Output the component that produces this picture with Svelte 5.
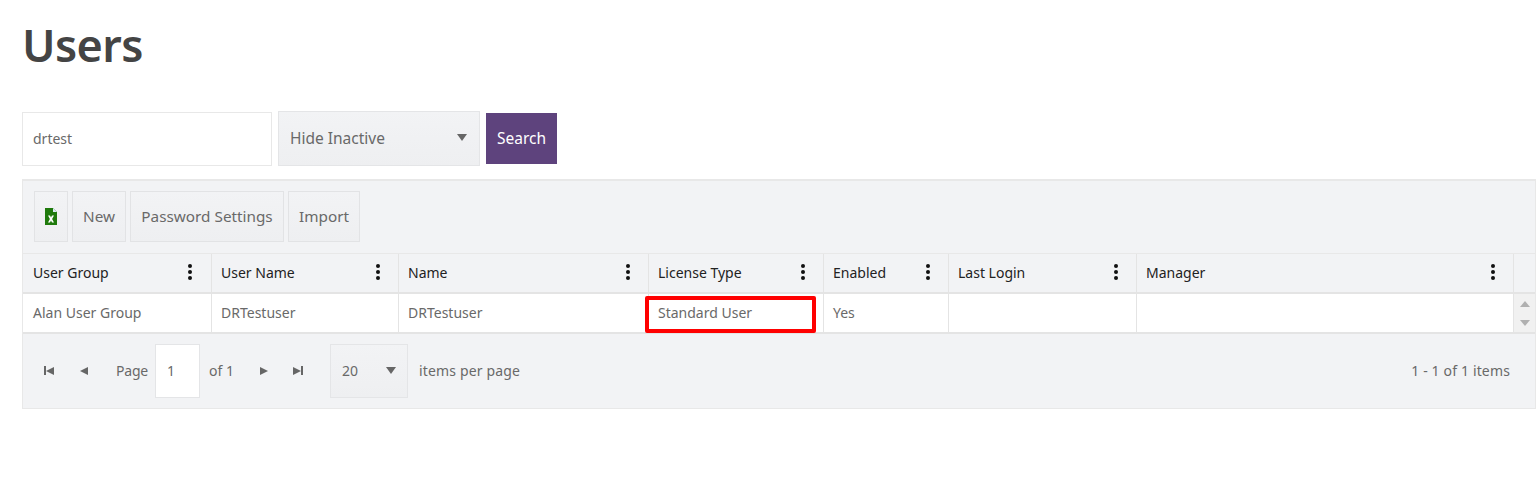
<script>
  const columns = [
    { title: "User Group", value: "Alan User Group", width: 189 },
    { title: "User Name", value: "DRTestuser", width: 187 },
    { title: "Name", value: "DRTestuser", width: 250 },
    { title: "License Type", value: "Standard User", width: 175, marked: true },
    { title: "Enabled", value: "Yes", width: 125 },
    { title: "Last Login", value: "", width: 188 },
    { title: "Manager", value: "", width: 377 }
  ];
</script>

<div class="page">
  <h1>Users</h1>

  <div class="filters">
    <input class="search-input" value="drtest" />
    <div class="select status">
      <span>Hide Inactive</span>
      <i class="caret"></i>
    </div>
    <button class="search-btn">Search</button>
  </div>

  <div class="grid">
    <div class="toolbar">
      <button class="tool excel" aria-label="Export to Excel">
        <svg width="12" height="17" viewBox="0 0 12 17">
          <path d="M0 0H8L12 4V17H0Z" fill="#1f7a0c" />
          <path d="M8 0L12 4H8Z" fill="#d9ecf5" />
          <path d="M3 7.5H5L6 9.6L7 7.5H9L7.1 11L9 14.5H7L6 12.4L5 14.5H3L4.9 11Z" fill="#fff" />
        </svg>
      </button>
      <button class="tool new">New</button>
      <button class="tool pass">Password Settings</button>
      <button class="tool import">Import</button>
    </div>

    <div class="table">
      <div class="row head">
        {#each columns as col}
          <div class="cell" style="width: {col.width}px">
            <span>{col.title}</span>
            <span class="dots"><b></b><b></b><b></b></span>
          </div>
        {/each}
        <div class="gutter"></div>
      </div>
      <div class="row body">
        {#each columns as col}
          <div class="cell" style="width: {col.width}px">
            {col.value}
            {#if col.marked}<div class="highlight"></div>{/if}
          </div>
        {/each}
        <div class="gutter scroll">
          <i class="up"></i>
          <i class="down"></i>
        </div>
      </div>
    </div>

    <div class="pager">
      <div class="nav">
        <span class="nav-btn"><i class="bar"></i><i class="tri left"></i></span>
        <span class="nav-btn"><i class="tri left"></i></span>
      </div>
      <span class="page-label">Page</span>
      <input class="page-input" value="1" />
      <span class="of">of 1</span>
      <div class="nav next">
        <span class="nav-btn"><i class="tri right"></i></span>
        <span class="nav-btn"><i class="tri right"></i><i class="bar"></i></span>
      </div>
      <div class="select size">
        <span>20</span>
        <i class="caret"></i>
      </div>
      <span class="per-page">items per page</span>
      <span class="info">1 - 1 of 1 items</span>
    </div>
  </div>
</div>

<style>
  :global(body) {
    margin: 0;
    background: #fff;
    font-family: "Noto Sans", "Open Sans", sans-serif;
    font-size: 14px;
    color: #696969;
  }

  .page {
    padding: 0 2px 0 22px;
  }

  h1 {
    margin: 0;
    padding-top: 15px;
    height: 111px;
    box-sizing: border-box;
    font-size: 45px;
    line-height: 60px;
    font-weight: 600;
    color: #444;
    letter-spacing: -0.6px;
  }

  .filters {
    display: flex;
    align-items: center;
    height: 55px;
    margin-bottom: 13px;
  }

  .search-input {
    width: 250px;
    height: 54px;
    box-sizing: border-box;
    border: 1px solid #e8e8e8;
    padding: 0 10px;
    font: inherit;
    font-size: 14px;
    color: #696969;
    outline: none;
    margin-right: 6px;
  }

  .select {
    display: flex;
    align-items: center;
    justify-content: space-between;
    box-sizing: border-box;
    background: linear-gradient(#f2f3f5, #eeeff1);
    border: 1px solid #e4e5e7;
  }

  .status {
    width: 202px;
    height: 55px;
    padding: 0 12px 2px 11px;
    font-size: 15.5px;
    margin-right: 6px;
  }

  .caret {
    width: 0;
    height: 0;
    border: 5.5px solid transparent;
    border-top: 7px solid #666;
    border-bottom: 0;
  }

  .search-btn {
    width: 71px;
    height: 51px;
    border: 0;
    padding: 0 0 2px;
    background: #5e437d;
    color: #fff;
    font: inherit;
    font-size: 15.5px;
  }

  .grid {
    box-sizing: border-box;
    width: 1514px;
    height: 230px;
    border: 1px solid #e8e8e8;
    border-top-width: 2px;
    background: #f2f3f5;
  }

  .toolbar {
    display: flex;
    gap: 4px;
    height: 72px;
    box-sizing: border-box;
    padding: 10px 11px;
  }

  .tool {
    height: 51px;
    box-sizing: border-box;
    padding: 0 0 2px;
    background: linear-gradient(#f2f3f5, #eeeff1);
    border: 1px solid #e2e3e5;
    font: inherit;
    font-size: 15.3px;
    color: #696969;
  }

  .excel {
    width: 34px;
    padding: 0;
    display: flex;
    align-items: center;
    justify-content: center;
  }

  .new {
    width: 54px;
  }

  .pass {
    width: 154px;
  }

  .import {
    width: 72px;
  }

  .row {
    display: flex;
    height: 40px;
  }

  .head {
    border-top: 1px solid #e8e8e8;
    border-bottom: 2px solid #e4e4e4;
    color: #222;
    box-sizing: content-box;
    height: 38px;
  }

  .body {
    background: #fff;
    border-bottom: 2px solid #e4e4e4;
    box-sizing: border-box;
  }

  .cell {
    position: relative;
    display: flex;
    align-items: center;
    justify-content: space-between;
    box-sizing: border-box;
    padding: 0 19px 2px 10px;
    border-right: 1px solid #e4e4e4;
  }

  .cell + .cell {
    padding-left: 9px;
    padding-right: 18px;
  }

  .dots {
    display: flex;
    flex-direction: column;
    gap: 2px;
  }

  .dots b {
    width: 4px;
    height: 4px;
    border-radius: 50%;
    background: #111;
  }

  .gutter {
    flex: 1;
  }

  .scroll {
    background: #f1f1f1;
    display: flex;
    flex-direction: column;
    align-items: center;
    gap: 13px;
    padding-top: 7px;
    box-sizing: border-box;
  }

  .up,
  .down {
    width: 0;
    height: 0;
    border: 5px solid transparent;
  }

  .up {
    border-bottom: 6px solid #b0b0b0;
    border-top: 0;
  }

  .down {
    border-top: 6px solid #b0b0b0;
    border-bottom: 0;
  }

  .highlight {
    position: absolute;
    left: -4px;
    top: 2px;
    width: 171px;
    height: 37px;
    box-sizing: border-box;
    border: 4px solid #f00;
    border-radius: 2px;
    pointer-events: none;
  }

  .pager {
    display: flex;
    align-items: center;
    height: 73px;
    padding: 0 25px 0 0;
  }

  .nav {
    display: flex;
    margin-left: 8px;
    width: 70px;
  }

  .nav-btn {
    width: 35px;
    height: 20px;
    display: flex;
    align-items: center;
    justify-content: center;
  }

  .tri {
    width: 0;
    height: 0;
    border: 4.5px solid transparent;
  }

  .tri.left {
    border-right: 8px solid #666;
    border-left: 0;
  }

  .tri.right {
    border-left: 8px solid #666;
    border-right: 0;
  }

  .bar {
    width: 2px;
    height: 9px;
    background: #666;
  }

  .page-label {
    margin-left: 15px;
    margin-right: 7px;
    letter-spacing: -0.2px;
  }

  .page-input {
    width: 45px;
    height: 54px;
    box-sizing: border-box;
    border: 1px solid #e4e5e7;
    padding: 0 11px;
    font: inherit;
    color: #696969;
    outline: none;
  }

  .of {
    margin-left: 9px;
    width: 25px;
  }

  .nav.next {
    margin-left: 13px;
    width: 68px;
  }

  .size {
    width: 78px;
    height: 54px;
    margin-left: 15px;
    padding: 0 11px;
  }

  .per-page {
    margin-left: 11px;
    letter-spacing: 0.15px;
  }

  .info {
    margin-left: auto;
    letter-spacing: 0.15px;
  }
</style>
